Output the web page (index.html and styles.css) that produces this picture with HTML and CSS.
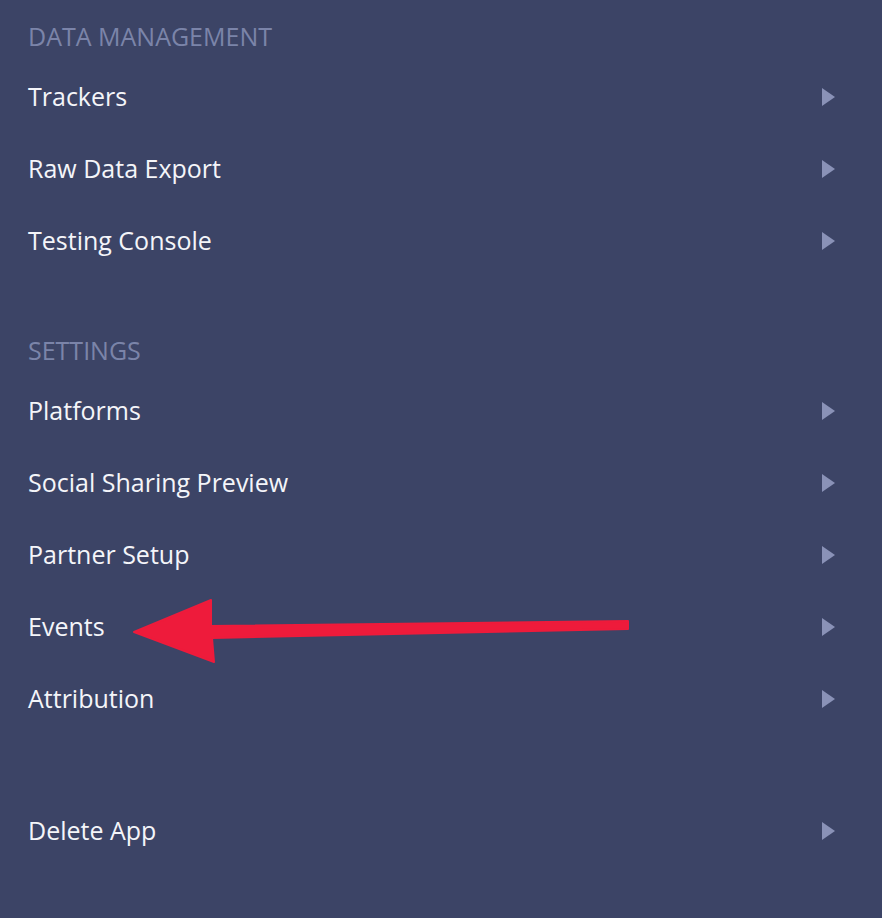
FILE: index.html
```html
<!DOCTYPE html>
<html>
<head>
<meta charset="utf-8">
<link rel="stylesheet" href="styles.css">
</head>
<body>
<div class="menu">
  <section class="group">
    <h2 class="group-title">DATA MANAGEMENT</h2>
    <a class="item"><span>Trackers</span><i class="chev"></i></a>
    <a class="item"><span>Raw Data Export</span><i class="chev"></i></a>
    <a class="item"><span>Testing Console</span><i class="chev"></i></a>
  </section>
  <section class="group">
    <h2 class="group-title">SETTINGS</h2>
    <a class="item"><span>Platforms</span><i class="chev"></i></a>
    <a class="item"><span>Social Sharing Preview</span><i class="chev"></i></a>
    <a class="item"><span>Partner Setup</span><i class="chev"></i></a>
    <a class="item"><span>Events</span><i class="chev"></i></a>
    <a class="item"><span>Attribution</span><i class="chev"></i></a>
  </section>
  <section class="group danger">
    <a class="item"><span>Delete App</span><i class="chev"></i></a>
  </section>
  <svg class="annot" width="882" height="918" viewBox="0 0 882 918">
    <path d="M628 621 L628 629 L212 638 L214 662 L134 632 L211 600 L211 626 Z" fill="#ee1b3b" stroke="#ee1b3b" stroke-width="2" stroke-linejoin="round"/>
  </svg>
</div>
</body>
</html>
```
FILE: styles.css
```css
html, body {
  margin: 0;
  padding: 0;
  background: #3c4466;
}
body {
  font-family: "Open Sans", "Noto Sans", sans-serif;
  -webkit-font-smoothing: antialiased;
}
.menu {
  position: relative;
  width: 882px;
  height: 918px;
  padding-top: 12px;
  box-sizing: border-box;
}
.group {
  display: flex;
  flex-direction: column;
  margin-bottom: 50px;
}
.group.danger {
  margin-top: 60px;
}
.group-title {
  margin: 0;
  height: 48px;
  display: flex;
  align-items: center;
  padding-left: 28px;
  font-size: 25px;
  font-weight: 400;
  letter-spacing: 0;
  color: #7b84a9;
}
.item {
  height: 72px;
  display: flex;
  align-items: center;
  justify-content: space-between;
  padding: 0 47px 0 28px;
  font-size: 25px;
  color: #f4f5f9;
  letter-spacing: 0;
}
.chev {
  width: 0;
  height: 0;
  margin-top: 2px;
  border-top: 9px solid transparent;
  border-bottom: 9px solid transparent;
  border-left: 13px solid #8a92b7;
}
.annot {
  position: absolute;
  left: 0;
  top: 0;
  pointer-events: none;
}
```
